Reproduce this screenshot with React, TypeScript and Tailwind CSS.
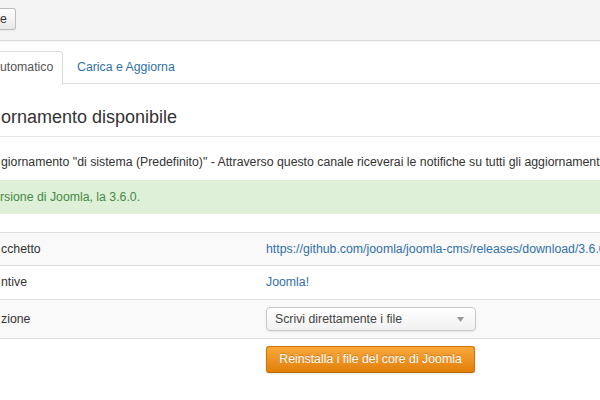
import React from 'react';

const rows = [
    { label: 'cchetto', kind: 'link', value: 'https://github.com/joomla/joomla-cms/releases/download/3.6.0/Joomla_3.6.0-Stable-Full_Package.zip' },
    { label: 'ntive', kind: 'link', value: 'Joomla!' },
];

const App = () => {
    return (
        <div className="w-[600px] h-[400px] overflow-hidden bg-white text-[#333] text-[12.3px] font-['Liberation_Sans',Arial,sans-serif]">
            {/* toolbar */}
            <div className="h-[41px] bg-[#f4f4f4] border-b border-[#dadada] pt-[8px] shadow-[0_1px_0_#f7f7f7]">
                <button className="h-[22px] w-[16px] rounded-r-[3px] border border-l-0 border-[#bdbdbd] bg-linear-to-b from-white to-[#e8e8e8] text-left leading-[20px] text-[#333] shadow-[0_1px_1px_rgba(0,0,0,0.05)]">
                    e
                </button>
            </div>

            {/* tabs */}
            <div className="pt-[10px]">
                <div className="flex h-[33px] border-b border-[#ddd]">
                    <div className="w-[63px] h-[34px] bg-white border-t border-r border-[#ddd] rounded-tr-[4px] leading-[31px] text-[#555]">
                        utomatico
                    </div>
                    <a className="pl-[14px] leading-[33px] text-[#3071a9]">Carica e Aggiorna</a>
                </div>
            </div>

            {/* heading */}
            <h2 className="mt-[13px] h-[40px] border-b border-[#e5e5e5] text-[18px] leading-[40px] pl-px whitespace-nowrap">
                ornamento disponibile
            </h2>

            <p className="mt-[16px] mb-[9px] leading-[18px] whitespace-nowrap pl-px">
                giornamento "di sistema (Predefinito)" - Attraverso questo canale riceverai le notifiche su tutti gli aggiornamenti di Joomla
            </p>

            {/* alert */}
            <div className="bg-[#dff0d8] text-[#468847] py-[8px] leading-[18px] whitespace-nowrap">
                rsione di Joomla, la 3.6.0.
            </div>

            {/* table */}
            <div className="mt-[18px]">
                {rows.map((row, index) => (
                    <div
                        key={index}
                        className={`grid grid-cols-[258px_1fr] border-t border-[#ddd] py-[8px] ${index === 0 ? 'bg-[#f9f9f9] leading-[16px]' : 'bg-white leading-[17px]'}`}
                    >
                        <div className="pl-px">{row.label}</div>
                        <div className="pl-[8px] text-[#3071a9] whitespace-nowrap overflow-hidden">{row.value}</div>
                    </div>
                ))}
                <div className="grid grid-cols-[258px_1fr] border-t border-[#ddd] bg-[#f9f9f9] py-[7px]">
                    <div className="pl-px leading-[24px]">zione</div>
                    <div className="pl-[8px]">
                        <div className="flex items-center justify-between w-[210px] h-[24px] rounded-[4px] border border-[#c8c8c8] bg-linear-to-b from-white to-[#f1f1f1] pl-[8px] pr-[11px] text-[#444] shadow-[0_1px_2px_rgba(0,0,0,0.08)]">
                            <span>Scrivi direttamente i file</span>
                            <svg width="7" height="5" viewBox="0 0 7 5">
                                <path d="M0 0h7L3.5 5z" fill="#999" />
                            </svg>
                        </div>
                    </div>
                </div>
                <div className="grid grid-cols-[258px_1fr] border-t border-[#ddd] bg-white pt-[7px]">
                    <div />
                    <div className="pl-[8px]">
                        <button className="w-[209px] h-[27px] rounded-[3px] border border-[#d07400] border-b-[#b86600] bg-linear-to-b from-[#f9a83a] to-[#e27f00] text-white text-[12.3px] [text-shadow:0_-1px_0_rgba(0,0,0,0.2)] shadow-[0_1px_2px_rgba(0,0,0,0.1)]">
                            Reinstalla i file del core di Joomla
                        </button>
                    </div>
                </div>
            </div>
        </div>
    );
};

export default App;
